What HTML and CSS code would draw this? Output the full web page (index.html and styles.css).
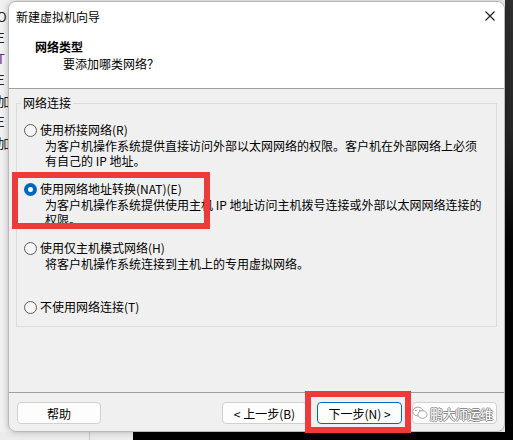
FILE: index.html
```html
<!DOCTYPE html>
<html lang="zh-CN">
<head>
    <meta charset="UTF-8">
    <meta name="viewport" content="width=device-width, initial-scale=1.0">
    <title>新建虚拟机向导</title>
    <link rel="stylesheet" href="styles.css">
</head>
<body>
    <div class="screen">
        <!-- окно позади диалога -->
        <div class="bgwin">
            <span>O</span>
            <span>E</span>
            <span class="purple">T</span>
            <span>E</span>
            <span>加</span>
            <span>E</span>
            <span>加</span>
        </div>

        <div class="dialog">
            <div class="header">
                <div class="titlebar">
                    <span class="title">新建虚拟机向导</span>
                    <svg class="close" width="10" height="10" viewBox="0 0 10 10">
                        <path d="M0.5 0.5 L9.5 9.5 M9.5 0.5 L0.5 9.5" stroke="#1a1a1a" stroke-width="1.1" fill="none"/>
                    </svg>
                </div>
                <div class="page-title">网络类型</div>
                <div class="page-sub">要添加哪类网络？</div>
            </div>

            <div class="body">
                <fieldset class="group">
                    <legend>网络连接</legend>

                    <div class="opt">
                        <div class="opt-label"><span class="radio"></span>使用桥接网络(R)</div>
                        <div class="opt-desc">为客户机操作系统提供直接访问外部以太网网络的权限。客户机在外部网络上必须<br>有自己的 IP 地址。</div>
                    </div>

                    <div class="opt">
                        <div class="opt-label"><span class="radio checked"></span>使用网络地址转换(NAT)(E)</div>
                        <div class="opt-desc">为客户机操作系统提供使用主机 IP 地址访问主机拨号连接或外部以太网网络连接的<br>权限。</div>
                    </div>

                    <div class="opt">
                        <div class="opt-label"><span class="radio"></span>使用仅主机模式网络(H)</div>
                        <div class="opt-desc">将客户机操作系统连接到主机上的专用虚拟网络。</div>
                    </div>

                    <div class="opt last">
                        <div class="opt-label"><span class="radio"></span>不使用网络连接(T)</div>
                    </div>
                </fieldset>
            </div>

            <div class="footer">
                <button class="btn">帮助</button>
                <span class="spacer"></span>
                <button class="btn btn-back">&lt; 上一步(B)</button>
                <button class="btn btn-next">下一步(N) &gt;</button>
                <!-- подпись кнопки "取消" закрыта водяным знаком -->
                <button class="btn btn-cancel"></button>
            </div>
        </div>

        <div class="edge-right"></div>
        <div class="edge-bottom"></div>

        <!-- пометки поверх скриншота -->
        <div class="mark mark-nat"></div>
        <div class="mark mark-next"></div>
        <div class="watermark">
            <svg width="16" height="14" viewBox="0 0 16 14">
                <ellipse cx="6" cy="5.5" rx="5.2" ry="4.4" fill="#fff" stroke="#9a9a9a" stroke-width="0.9"/>
                <ellipse cx="10.5" cy="8.5" rx="4.6" ry="3.8" fill="#fff" stroke="#9a9a9a" stroke-width="0.9"/>
                <circle cx="4" cy="4.6" r="0.8" fill="#9a9a9a"/>
                <circle cx="7.8" cy="4.6" r="0.8" fill="#9a9a9a"/>
            </svg>
            <span>鹏大师运维</span>
        </div>
    </div>
</body>
</html>
```

FILE: styles.css
```css
body {
    margin: 0;
    font-family: "Noto Sans CJK SC", "Liberation Sans", sans-serif;
    font-size: 12px;
    color: #000;
}
.screen {
    position: relative;
    width: 513px;
    height: 440px;
    overflow: hidden;
    display: grid;
    grid-template-columns: 8px 497px 8px;
    grid-template-rows: 432px 8px;
    background: #f3f3f3;
}
.bgwin {
    grid-column: 1;
    grid-row: 1;
    display: flex;
    flex-direction: column;
    padding-top: 6px;
    background: #f1f1f1;
    overflow: hidden;
}
.bgwin span {
    line-height: 21px;
    font-size: 13px;
    color: #222;
    margin-left: -3px;
}
.bgwin .purple {
    color: #6b2b86;
}
.dialog {
    grid-column: 2;
    grid-row: 1;
    margin-top: 1px;
    height: 431px;
    box-sizing: border-box;
    border: 1px solid #b9b9b9;
    border-radius: 8px;
    overflow: hidden;
    background: #f0f0f0;
    display: flex;
    flex-direction: column;
    box-shadow: 0 0 6px rgba(0, 0, 0, 0.25);
    position: relative;
    z-index: 1;
}
.header {
    height: 87px;
    box-sizing: border-box;
    background: #fff;
    border-bottom: 1px solid #a0a0a0;
}
.titlebar {
    height: 29px;
    display: flex;
    align-items: center;
    justify-content: space-between;
    padding: 0 9px 0 7px;
}
.close {
    margin-top: -2px;
}
.page-title {
    margin-top: 8px;
    padding-left: 26px;
    line-height: 16px;
    font-weight: bold;
}
.page-sub {
    margin-top: 1px;
    padding-left: 54px;
    line-height: 16px;
}
.body {
    flex: 1;
}
.group {
    margin: 6px 7px 0 7px;
    padding: 11px 0 11px 0;
    border: 1px solid #dcdcdc;
    min-width: 0;
}
.group legend {
    margin-left: 4px;
    padding: 0 2px;
    line-height: 16px;
}
.opt {
    margin-bottom: 13px;
}
.opt.last {
    margin-bottom: 0;
}
.opt-label {
    display: flex;
    align-items: center;
    line-height: 16px;
    white-space: nowrap;
}
.radio {
    width: 13px;
    height: 13px;
    box-sizing: border-box;
    margin-left: 7px;
    margin-right: 3px;
    border: 1px solid #5c5c5c;
    border-radius: 50%;
    background: #f5f5f5;
}
.radio.checked {
    border: 4px solid #0067c0;
    background: #fff;
}
.opt-desc {
    margin-left: 28px;
    line-height: 15px;
    min-height: 30px;
    white-space: nowrap;
}
.footer {
    height: 39px;
    box-sizing: border-box;
    border-top: 1px solid #a0a0a0;
    padding: 9px 7px 0 8px;
    display: flex;
    align-items: flex-start;
}
.spacer {
    flex: 1;
}
.btn {
    width: 85px;
    height: 22px;
    box-sizing: border-box;
    padding: 0;
    border: 1px solid #d0d0d0;
    border-radius: 4px;
    background: #fdfdfd;
    font-family: inherit;
    font-size: 12px;
    color: #000;
}
.btn:first-child {
    width: 84px;
}
.btn-back,
.btn-next {
    margin-right: 10px;
}
.btn-next {
    border-color: #0067c0;
}
.edge-right {
    grid-column: 3;
    grid-row: 1 / 3;
    background: linear-gradient(#2f2f2f, #262626 30%, #050505 55%, #000);
}
.edge-bottom {
    grid-column: 1 / 3;
    grid-row: 2;
    background: linear-gradient(to right, #ebebeb 0 89px, #c9c9c9 89px 90px, #ebebeb 90px 133px, #000 133px);
}
.mark {
    position: absolute;
    border: 6px solid #ef3a3b;
    box-sizing: border-box;
    z-index: 2;
}
.mark-nat {
    left: 12px;
    top: 172px;
    width: 198px;
    height: 57px;
}
.mark-next {
    left: 305px;
    top: 391px;
    width: 106px;
    height: 42px;
}
.watermark {
    position: absolute;
    left: 412px;
    top: 402px;
    width: 84px;
    height: 22px;
    display: flex;
    align-items: center;
    gap: 2px;
    z-index: 2;
}
.watermark span {
    font-size: 13px;
    color: #fff;
    letter-spacing: -0.5px;
    text-shadow: 1px 0 0 #8a8a8a, -1px 0 0 #8a8a8a, 0 1px 0 #8a8a8a, 0 -1px 0 #8a8a8a;
}
```
